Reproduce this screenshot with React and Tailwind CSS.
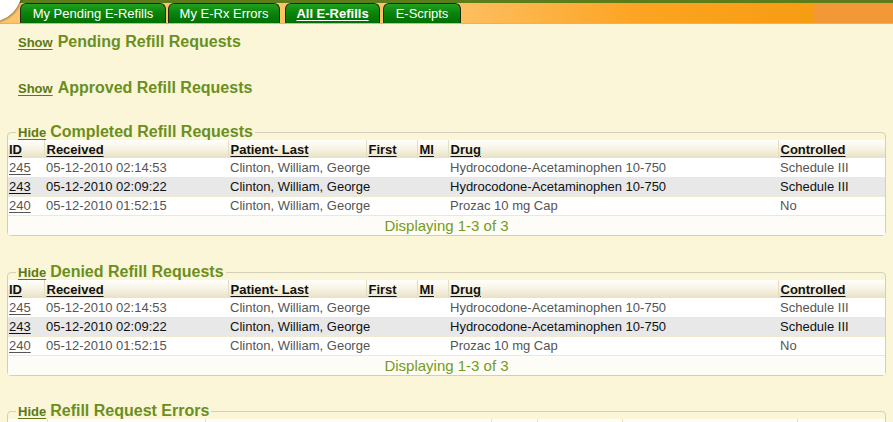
import React from "react";

const rows = [
  { id: "245", rec: "05-12-2010 02:14:53", pat: "Clinton, William, George", drug: "Hydrocodone-Acetaminophen 10-750", ctl: "Schedule III", alt: false },
  { id: "243", rec: "05-12-2010 02:09:22", pat: "Clinton, William, George", drug: "Hydrocodone-Acetaminophen 10-750", ctl: "Schedule III", alt: true },
  { id: "240", rec: "05-12-2010 01:52:15", pat: "Clinton, William, George", drug: "Prozac 10 mg Cap", ctl: "No", alt: false },
];

function Tab({ label, w, active }) {
  return (
    <div
      className={`h-[20px] flex items-center justify-center rounded-t-[6px] border border-b-0 border-[#1d2a10] bg-[linear-gradient(to_bottom,#21a021_0%,#0b850b_45%,#006f00_100%)] text-white text-[13px] leading-none ${w}`}
    >
      <span className={active ? "font-bold underline underline-offset-2" : ""}>{label}</span>
    </div>
  );
}

function ShowHeader({ title }) {
  return (
    <div className="flex items-baseline gap-[5px] pl-[18px] h-[18px]">
      <a className="text-[13px] font-bold text-[#5b7a17] underline underline-offset-2">Show</a>
      <span className="text-[16px] font-bold text-[#6a8f1e]">{title}</span>
    </div>
  );
}

function Legend({ title }) {
  return (
    <legend className="ml-[8px] px-[2px] -mb-[2px] flex items-baseline gap-[4px] leading-[18px]">
      <a className="text-[13px] font-bold text-[#5b7a17] underline underline-offset-2">Hide</a>
      <span className="text-[16px] font-bold text-[#6a8f1e]">{title}</span>
    </legend>
  );
}

function HeadCell({ children, w, first }) {
  return (
    <th
      className={`${w} text-left font-bold text-[13px] text-[#111] underline underline-offset-[2px] whitespace-nowrap ${first ? "pl-[1px]" : "pl-[2px] border-l border-l-[#e4ddc2]"} align-middle`}
    >
      {children}
    </th>
  );
}

function Block({ title }) {
  return (
    <fieldset className="mx-[7px] border border-[#d3cfbb] rounded-[4px] px-0 pb-0 -mt-[1px]">
      <Legend title={title} />
      <table className="w-full table-fixed border-collapse text-[13px] leading-none">
        <thead>
          <tr className="h-[18px] bg-[linear-gradient(to_bottom,#fffffc_0%,#f7f3e4_50%,#e9e1c4_100%)]">
            <HeadCell w="w-[36px]" first>ID</HeadCell>
            <HeadCell w="w-[184px]">Received</HeadCell>
            <HeadCell w="w-[138px]">Patient- Last</HeadCell>
            <HeadCell w="w-[51px]">First</HeadCell>
            <HeadCell w="w-[31px]">MI</HeadCell>
            <HeadCell w="w-[330px]">Drug</HeadCell>
            <HeadCell w="">Controlled</HeadCell>
          </tr>
        </thead>
        <tbody>
          {rows.map((r) => (
            <tr
              key={r.id}
              className={`h-[19px] border-b border-b-[#efe9cf] whitespace-nowrap ${r.alt ? "bg-[#e8e8e8] text-[#111]" : "bg-white text-[#555]"}`}
            >
              <td className="pl-[1px]">
                <a className={`underline underline-offset-[2px] ${r.alt ? "text-[#111]" : "text-[#555]"}`}>{r.id}</a>
              </td>
              <td className="pl-[2px]">{r.rec}</td>
              <td className="pl-[2px] overflow-visible">{r.pat}</td>
              <td></td>
              <td></td>
              <td className="pl-[2px]">{r.drug}</td>
              <td className="pl-[2px]">{r.ctl}</td>
            </tr>
          ))}
          <tr className="h-[20px] bg-[#fdfcf6]">
            <td colSpan={7} className="text-center text-[15px] text-[#789a22]">
              Displaying 1-3 of 3
            </td>
          </tr>
        </tbody>
      </table>
    </fieldset>
  );
}

export default function App() {
  return (
    <div className="w-[893px] h-[422px] overflow-hidden bg-[#fcf6d8] font-['Liberation_Sans',Arial,sans-serif] relative">
      {/* top bar */}
      <div className="relative h-[24px] bg-[linear-gradient(to_right,#fdc56b_0%,#fdc164_50%,#fca321_72%,#f79d12_91%,#f39836_91.3%,#f39836_100%)] border-t-[3px] border-t-[#5c7d1a] border-b border-b-[#b4c684]">
        <div className="absolute left-[20px] bottom-0 flex items-end">
          <Tab label="My Pending E-Refills" w="w-[146px]" />
          <div className="w-[2px]" />
          <Tab label="My E-Rx Errors" w="w-[112px]" />
          <div className="w-[5px]" />
          <Tab label="All E-Refills" w="w-[95px]" active />
          <div className="w-[3px]" />
          <Tab label="E-Scripts" w="w-[78px]" />
        </div>
      </div>
      <div className="absolute z-10 -left-[42px] -top-[42px] w-[64px] h-[64px] rounded-full bg-white shadow-[1px_1px_2px_rgba(0,0,0,0.35)]"></div>

      <div className="pt-[6px]">
        <ShowHeader title="Pending Refill Requests" />
      </div>
      <div className="pt-[28px]">
        <ShowHeader title="Approved Refill Requests" />
      </div>

      <div className="pt-[30px]">
        <Block title="Completed Refill Requests" />
      </div>
      <div className="pt-[28px]">
        <Block title="Denied Refill Requests" />
      </div>
      <div className="pt-[27px]">
        <fieldset className="mx-[7px] border border-[#d3cfbb] rounded-[4px] px-0 pb-0 -mt-[1px]">
          <Legend title="Refill Request Errors" />
          <div className="h-[18px] flex bg-[linear-gradient(to_bottom,#fffffc_0%,#f7f3e4_50%,#e9e1c4_100%)]">
            <div className="w-[39px]" />
            <div className="w-[158px] border-l border-l-[#e4ddc2]" />
            <div className="w-[286px] border-l border-l-[#e4ddc2]" />
            <div className="w-[46px] border-l border-l-[#e4ddc2]" />
            <div className="w-[85px] border-l border-l-[#e4ddc2]" />
            <div className="w-[175px] border-l border-l-[#e4ddc2]" />
            <div className="flex-1 border-l border-l-[#e4ddc2]" />
          </div>
        </fieldset>
      </div>
    </div>
  );
}
